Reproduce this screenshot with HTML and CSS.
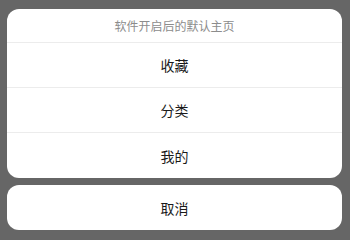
FILE: index.html
```html
<!DOCTYPE html>
<html lang="zh-CN">
<head>
<meta charset="utf-8">
<link rel="stylesheet" href="styles.css">
</head>
<body>
<div class="sheet">
  <div class="group">
    <div class="title">软件开启后的默认主页</div>
    <div class="item">收藏</div>
    <div class="item">分类</div>
    <div class="item last">我的</div>
  </div>
  <div class="group cancel">
    <div class="item last">取消</div>
  </div>
</div>
</body>
</html>
```

FILE: styles.css
```css
html, body {
  margin: 0;
  padding: 0;
  background: #666666;
  width: 350px;
  height: 237px;
  overflow: hidden;
}
.sheet {
  display: flex;
  flex-direction: column;
  gap: 7px;
  padding: 9px 8px 0 7px;
  font-family: "Noto Sans CJK SC", "Noto Sans", sans-serif;
}
.group {
  background: #ffffff;
  border-radius: 12px;
  overflow: hidden;
  display: flex;
  flex-direction: column;
}
.title {
  height: 33px;
  border-bottom: 1px solid #ececec;
  display: flex;
  align-items: center;
  justify-content: center;
  font-size: 12px;
  color: #8c8c8c;
}
.item {
  height: 44px;
  border-bottom: 1px solid #ececec;
  display: flex;
  align-items: center;
  justify-content: center;
  font-size: 14px;
  color: #1a1a1a;
}
.item.last {
  border-bottom: none;
  height: 45px;
}
```
